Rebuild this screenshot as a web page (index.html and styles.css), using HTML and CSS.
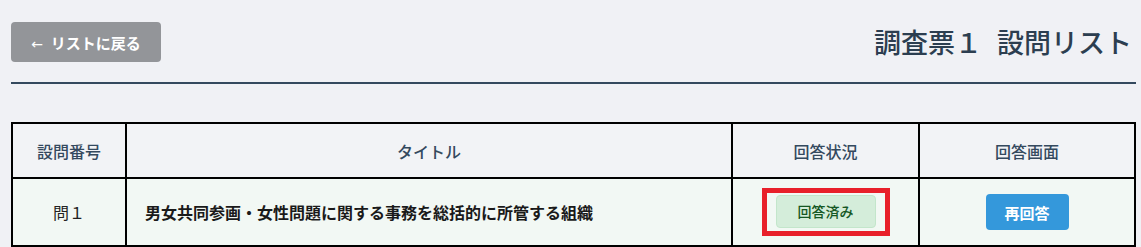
FILE: index.html
```html
<!DOCTYPE html>
<html lang="ja">
<head>
    <meta charset="UTF-8">
    <meta name="viewport" content="width=device-width, initial-scale=1.0">
    <title>調査票１　設問リスト</title>
    <link rel="stylesheet" href="styles.css">
</head>
<body>
    <!-- ページ全体 -->
    <div class="page">
        <!-- ヘッダー：戻るボタンとタイトル -->
        <div class="page-header">
            <button class="back-btn"><span class="back-arrow">←</span>リストに戻る</button>
            <h1 class="page-title">調査票１<span class="title-sub">設問リスト</span></h1>
        </div>

        <!-- 設問一覧 -->
        <table class="question-table">
            <colgroup>
                <col class="col-no">
                <col>
                <col class="col-status">
                <col class="col-action">
            </colgroup>
            <thead>
                <tr>
                    <th>設問番号</th>
                    <th>タイトル</th>
                    <th>回答状況</th>
                    <th>回答画面</th>
                </tr>
            </thead>
            <tbody>
                <tr>
                    <td class="cell-no">問１</td>
                    <td class="cell-title">男女共同参画・女性問題に関する事務を総括的に所管する組織</td>
                    <td class="cell-center">
                        <span class="highlight"><span class="status-badge">回答済み</span></span>
                    </td>
                    <td class="cell-center">
                        <button class="answer-btn">再回答</button>
                    </td>
                </tr>
            </tbody>
        </table>
    </div>
</body>
</html>
```

FILE: styles.css
```css
/* ページ全体 */
body {
    margin: 0;
    background-color: #f0f1f5;
    font-family: "Noto Sans CJK JP", "Noto Sans", sans-serif;
    color: #333;
}

.page {
    padding: 0 5px 0 11px;
}

/* ヘッダー */
.page-header {
    display: flex;
    justify-content: space-between;
    align-items: center;
    padding: 22px 0 20px;
    border-bottom: 2px solid #34495e;
}

.back-btn {
    width: 150px;
    height: 40px;
    background-color: #939599;
    color: #fff;
    border: none;
    border-radius: 4px;
    font-family: inherit;
    font-size: 15px;
    font-weight: 700;
    cursor: pointer;
}

.back-arrow {
    font-family: "DejaVu Sans", sans-serif;
    font-size: 14px;
    font-weight: 400;
    margin-right: 8px;
}

.page-title {
    margin: 0 4px 0 0;
    font-size: 27px;
    font-weight: 500;
    line-height: 1.2;
    color: #2c3e50;
}

.title-sub {
    margin-left: 15px;
}

/* 設問テーブル */
.question-table {
    width: 100%;
    margin-top: 38px;
    border-collapse: collapse;
    border: 2px solid #000;
}

.col-no {
    width: 114px;
}

.col-status {
    width: 187px;
}

.col-action {
    width: 216px;
}

.question-table th,
.question-table td {
    border: 2px solid #000;
    padding: 0;
}

.question-table th {
    height: 53px;
    background-color: #f2f3f6;
    color: #34495e;
    font-size: 16px;
    font-weight: 500;
    text-align: center;
}

.question-table td {
    height: 66px;
    background-color: #f2f8f4;
}

.cell-no {
    text-align: center;
    font-size: 16px;
    color: #222;
}

.cell-title {
    padding-left: 18px !important;
    font-size: 16px;
    font-weight: 700;
    color: #1a1a1a;
}

.cell-center {
    text-align: center;
}

/* 赤枠の強調 */
.highlight {
    display: inline-block;
    padding: 2px 9px 3px;
    border: 5px solid #e8202a;
    vertical-align: middle;
}

/* 回答済みバッジ */
.status-badge {
    display: block;
    width: 98px;
    line-height: 31px;
    background-color: #d4edda;
    border: 1px solid #c3e6cb;
    border-radius: 4px;
    color: #155724;
    font-size: 14px;
    font-weight: 500;
}

/* 再回答ボタン */
.answer-btn {
    width: 83px;
    height: 36px;
    background-color: #3498db;
    color: #fff;
    border: none;
    border-radius: 4px;
    font-family: inherit;
    font-size: 15px;
    font-weight: 700;
    vertical-align: middle;
    cursor: pointer;
}
```
